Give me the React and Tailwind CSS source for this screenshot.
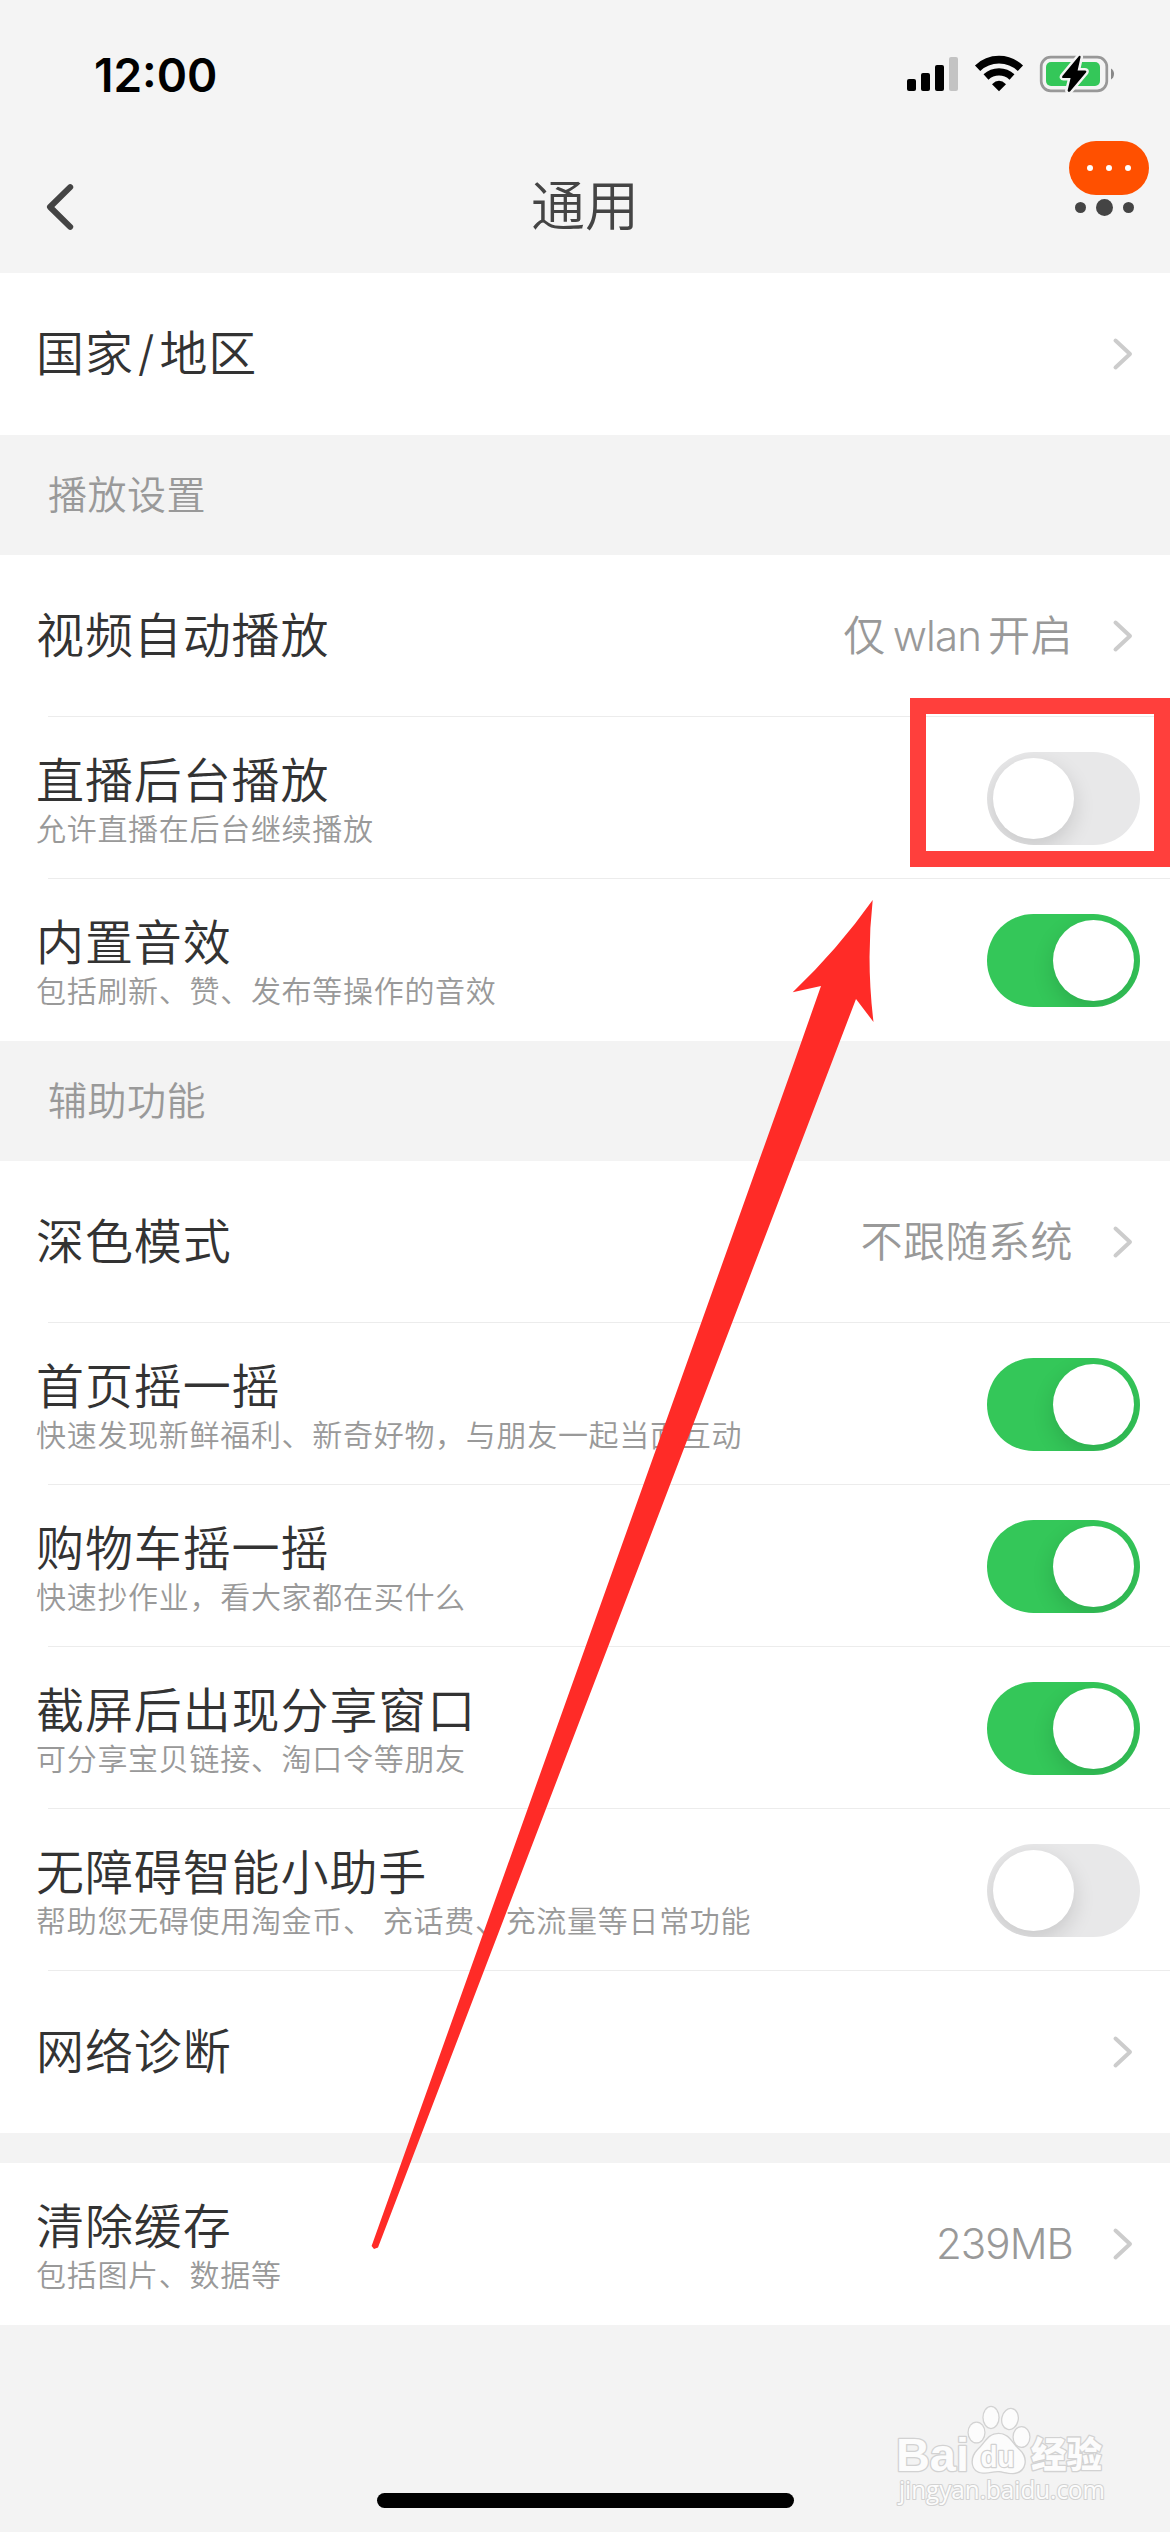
import React, { useState } from 'react';

const groups = [
  {
    rows: [{ id: 'region', title: '国家/地区', type: 'link' }],
  },
  {
    label: '播放设置',
    rows: [
      { id: 'autoplay', title: '视频自动播放', type: 'link', value: ['仅', 'wlan', '开启'] },
      { id: 'live-bg', title: '直播后台播放', desc: '允许直播在后台继续播放', type: 'switch', on: false },
      { id: 'sound', title: '内置音效', desc: '包括刷新、赞、发布等操作的音效', type: 'switch', on: true },
    ],
  },
  {
    label: '辅助功能',
    rows: [
      { id: 'dark', title: '深色模式', type: 'link', value: ['不跟随系统'] },
      { id: 'home-shake', title: '首页摇一摇', desc: '快速发现新鲜福利、新奇好物，与朋友一起当面互动', type: 'switch', on: true },
      { id: 'cart-shake', title: '购物车摇一摇', desc: '快速抄作业，看大家都在买什么', type: 'switch', on: true },
      { id: 'share', title: '截屏后出现分享窗口', desc: '可分享宝贝链接、淘口令等朋友', type: 'switch', on: true },
      { id: 'assistant', title: '无障碍智能小助手', desc: '帮助您无碍使用淘金币、 充话费、充流量等日常功能', type: 'switch', on: false },
      { id: 'network', title: '网络诊断', type: 'link' },
    ],
  },
  {
    gap: true,
    rows: [{ id: 'cache', title: '清除缓存', desc: '包括图片、数据等', type: 'link', value: ['239MB'] }],
  },
];

// Status bar
const StatusBar = () => (
  <div className="flex h-[141px] items-start justify-between pt-[50px] pr-[54px] pl-[94px]">
    <span className="font-['Inter'] text-[46px] leading-[50px] font-semibold text-black">12:00</span>
    <svg className="mt-[4px]" width="210" height="40" viewBox="906 54 210 40">
      <rect x="907" y="79" width="9" height="12" rx="2" />
      <rect x="921" y="73" width="9" height="18" rx="2" />
      <rect x="935" y="65" width="9" height="26" rx="2" />
      <rect x="949" y="57" width="9" height="34" rx="2" fill="#c3c3c3" />
      <path d="M977.6 68.2 A31 31 0 0 1 1020.4 68.2" fill="none" stroke="#000" strokeWidth="7.6" />
      <path d="M986 77 A19 19 0 0 1 1012 77" fill="none" stroke="#000" strokeWidth="7.2" />
      <path d="M992 84.2 Q999 77.4 1006 84.2 L999 91.2 Z" />
      <rect x="1041.2" y="57.2" width="65.6" height="33.6" rx="9.5" fill="none" stroke="#989898" strokeWidth="2.7" />
      <rect x="1046" y="62" width="54" height="24" rx="5" fill="#34c759" />
      <path d="M1111 68.5 A6.5 6.5 0 0 1 1111 79.5 Z" fill="#888" />
      <path
        d="M1079 56 L1062.4 76 Q1061.4 78 1063.4 78 L1070.6 78 L1067.6 90.6 Q1068.4 93 1070.2 91.2 L1086 72.4 Q1087 70.4 1085 70.4 L1077.6 70.4 L1080.6 57 Q1080.6 55 1079 56 Z"
        stroke="#f4f4f4"
        strokeWidth="5"
        strokeLinejoin="round"
        paintOrder="stroke"
      />
    </svg>
  </div>
);

const NavBar = () => (
  <div className="relative flex h-[132px] items-center justify-center">
    <button className="absolute top-[42px] left-[38px]">
      <svg width="40" height="48" viewBox="0 0 40 48">
        <path d="M32.2 4.2 L12 24 L32.2 43.8" fill="none" stroke="#444" strokeWidth="6" strokeLinecap="round" strokeLinejoin="round" />
      </svg>
    </button>
    <h1 className="text-[54px] leading-[60px] text-[#444]">通用</h1>
    <button className="absolute top-0 right-[21px] flex w-[80px] flex-col">
      <span className="flex h-[54px] items-center justify-center gap-[13px] rounded-full bg-[#ff5000]">
        <i className="size-[6px] rounded-full bg-white" />
        <i className="size-[6px] rounded-full bg-white" />
        <i className="size-[6px] rounded-full bg-white" />
      </span>
      <span className="mt-[4px] flex items-center gap-[10px] pl-[6px]">
        <i className="size-[11px] rounded-full bg-[#444]" />
        <i className="size-[17px] rounded-full bg-[#444]" />
        <i className="size-[11px] rounded-full bg-[#444]" />
      </span>
    </button>
  </div>
);

const Chevron = () => (
  <svg className="mr-[37px] ml-[39px]" width="21" height="34" viewBox="0 0 21 34">
    <path d="M3.5 3.5 L18 17 L3.5 30.5" fill="none" stroke="#ccc" strokeWidth="4" strokeLinecap="round" strokeLinejoin="round" />
  </svg>
);

const Switch = ({ on, onClick }) => (
  <button
    onClick={onClick}
    className={`mr-[30px] flex h-[93px] w-[153px] overflow-hidden rounded-full p-[6px] ${on ? 'justify-end bg-[#34c759]' : 'justify-start bg-[#e8e8e9]'}`}
  >
    <span className="size-[81px] rounded-full bg-white shadow-[0_8px_22px_rgba(0,0,0,0.14)]" />
  </button>
);

const Row = ({ row, last, checked, onToggle }) => (
  <div className="relative flex h-[162px] items-center bg-white pl-[36px]">
    <div className={`flex-1 ${row.desc ? 'pt-[6px]' : ''}`}>
      <div className="text-[48px] leading-[54px] tracking-[0.9px] text-[#333]">
        {row.title.split('/').map((part, i) => (
          <React.Fragment key={part}>
            {i > 0 && <span className="mx-[4px]">/</span>}
            {part}
          </React.Fragment>
        ))}
      </div>
      {row.desc && (
        <div className="mt-[2px] text-[30px] leading-[38px] tracking-[0.7px] whitespace-pre text-[#999]">{row.desc}</div>
      )}
    </div>
    {row.value && (
      <div className="flex gap-[7px] text-[42px] leading-[54px] text-[#999]">
        {row.value.map((part) => (
          <span key={part} className={/^\w+$/.test(part) ? 'tracking-[-0.9px]' : 'tracking-[0.5px]'}>
            {part}
          </span>
        ))}
      </div>
    )}
    {row.type === 'link' ? <Chevron /> : <Switch on={checked} onClick={onToggle} />}
    {!last && <div className="absolute right-0 bottom-0 left-[48px] h-px bg-[#ececec]" />}
  </div>
);

// Red box and arrow pointing at the live playback switch
const Annotation = () => (
  <>
    <div className="absolute top-[698px] left-[910px] h-[169px] w-[260px] border-[16.5px] border-[#ff3f3c]" />
    <svg className="pointer-events-none absolute top-[890px] left-[360px]" width="530" height="1370" viewBox="360 890 530 1370">
      <path
        d="M872.7 900 Q838 949 792.7 992.3 L821 986 L795 1060 L371.6 2246 L374 2249 L378 2247.6 L832.7 1060 L856 999 L873.5 1022 Q866 960 872.7 900 Z"
        fill="#ff2b27"
      />
    </svg>
  </>
);

const Watermark = () => (
  <svg className="absolute top-[2400px] left-[890px]" width="225" height="112" viewBox="890 2400 225 112">
    <g fill="#fcfcfc" stroke="#d2d2d2" strokeWidth="2.6" paintOrder="stroke" strokeLinejoin="round">
      <text x="896" y="2471" fontSize="46" fontWeight="700" fontFamily="Liberation Sans, Arial, sans-serif" textLength="73" lengthAdjust="spacingAndGlyphs">Bai</text>
      <ellipse cx="976.5" cy="2432.5" rx="7.8" ry="9.8" />
      <ellipse cx="991" cy="2417.5" rx="7.4" ry="10.4" />
      <ellipse cx="1010" cy="2419" rx="7.6" ry="10" transform="rotate(12 1010 2419)" />
      <ellipse cx="1021.5" cy="2437" rx="7.8" ry="9.8" />
      <path d="M998.5 2434 C1009 2434 1011 2443 1019 2450 C1028 2458 1026 2472 1013 2473 C1006 2473 1003 2471 998 2471 C992 2471 989 2473 983 2472.5 C971 2472 970 2458 978 2450 C986 2443 988 2434 998.5 2434 Z" />
      <text x="980.5" y="2467" fontSize="29" fontWeight="700" fontFamily="Liberation Sans, Arial, sans-serif" textLength="34" lengthAdjust="spacingAndGlyphs">du</text>
      <text x="1031" y="2468" fontSize="36" fontWeight="900" fontFamily="Noto Sans CJK SC, sans-serif" textLength="71" lengthAdjust="spacingAndGlyphs">经验</text>
      <text x="899" y="2499" fontSize="25" fontWeight="400" strokeWidth="2.2" fontFamily="Open Sans, sans-serif" textLength="206" lengthAdjust="spacingAndGlyphs">jingyan.baidu.com</text>
    </g>
  </svg>
);

const App = () => {
  const [switches, setSwitches] = useState(() =>
    Object.fromEntries(groups.flatMap((g) => g.rows).map((r) => [r.id, !!r.on]))
  );

  const toggle = (id) => setSwitches((prev) => ({ ...prev, [id]: !prev[id] }));

  return (
    <div className="relative flex h-[2532px] w-[1170px] flex-col overflow-hidden bg-[#f3f3f3] font-['Inter','Noto_Sans_CJK_SC',sans-serif] font-[350]">
      <header className="bg-[#f4f4f4]">
        <StatusBar />
        <NavBar />
      </header>
      <main>
        {groups.map((group, i) => (
          <section key={i} className={group.gap ? 'mt-[30px]' : ''}>
            {group.label && (
              <h2 className="flex h-[120px] items-center pl-[48px] text-[39px] tracking-[0.5px] text-[#999]">{group.label}</h2>
            )}
            {group.rows.map((row, j) => (
              <Row
                key={row.id}
                row={row}
                last={j === group.rows.length - 1}
                checked={switches[row.id]}
                onToggle={() => toggle(row.id)}
              />
            ))}
          </section>
        ))}
      </main>
      <div className="mx-auto mt-auto mb-[24px] h-[15px] w-[417px] rounded-full bg-black" />
      <Annotation />
      <Watermark />
    </div>
  );
};

export default App;
